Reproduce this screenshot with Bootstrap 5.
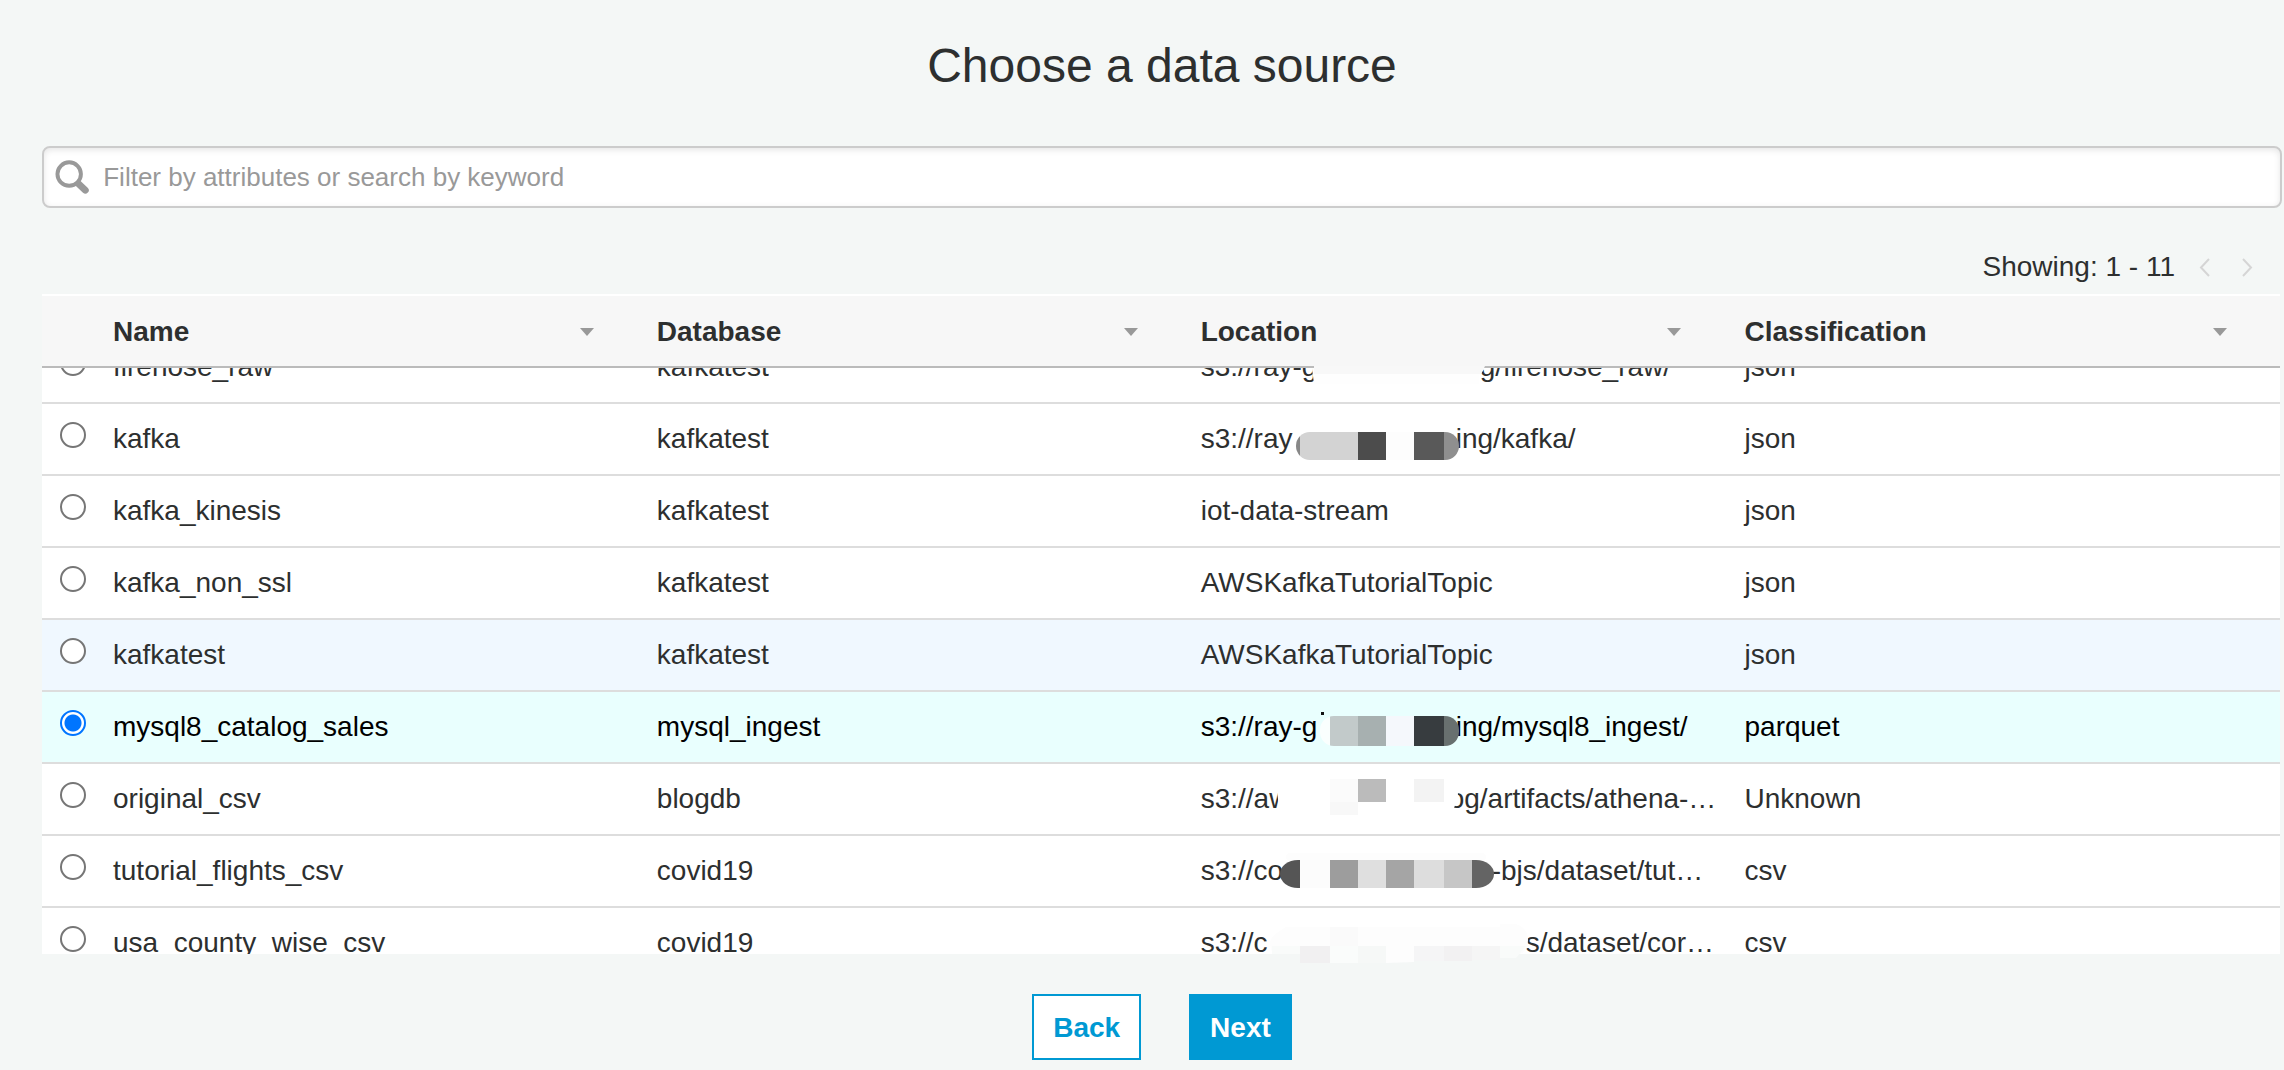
<!DOCTYPE html>
<html lang="en">
<head>
<meta charset="utf-8">
<meta name="viewport" content="width=device-width, initial-scale=1">
<title>Choose a data source</title>
<link href="https://cdn.jsdelivr.net/npm/bootstrap@5.3.0/dist/css/bootstrap.min.css" rel="stylesheet">
<style>
  body { background: #f4f7f6; color: #2d2f2f; font-family: "Liberation Sans", Arial, sans-serif; font-size: 28px; line-height: 32px; }
  .wizard { padding: 37px 2px 10px 42px; }
  .wizard-title { font-size: 48px; line-height: 58px; font-weight: 400; margin-bottom: 51px; }
  .filter-box { height: 62px; background: #fff; border: 2px solid #ccc; border-radius: 8px; box-shadow: inset 0 2px 6px rgba(0,0,0,.1); padding: 0 11px; gap: 13px; }
  .filter-box input { background: transparent; border: 0; padding: 0; font-size: 26px; line-height: 32px; color: #2d2f2f; box-shadow: none; }
  .filter-box input:focus { background: transparent; box-shadow: none; }
  .filter-box input::placeholder { color: #999; opacity: 1; }
  .pager { height: 86px; padding: 43px 27px 0 0; }
  .pager button { width: 14px; height: 22px; }
  .pager-arrows { gap: 30px; margin-left: 22px; padding-top: 7px; }
  .source-list { margin-right: 2px; }
  .source-scroll { height: 660px; overflow-y: auto; scrollbar-width: none; background: #fff; }
  .source-scroll::-webkit-scrollbar { display: none; }
  .source-table { width: 100%; table-layout: fixed; border-collapse: separate; border-spacing: 0; }
  .source-table col { width: 24.3%; }
  .source-table col:first-child { width: 61px; }
  .source-table col:last-child { width: auto; }
  .source-table th { position: sticky; top: 0; z-index: 1; height: 74px; background: #f7f7f7; border-top: 2px solid #fff; border-bottom: 2px solid #bbb; padding: 2px 53px 0 10px; }
  .source-table td { height: 72px; border-bottom: 2px solid #ddd; padding: 0 10px; white-space: nowrap; overflow: hidden; }
  .source-table td:first-child { padding: 0 0 0 18px; }
  .source-table label { display: block; }
  .row-hover td { background: #f0f8ff; }
  .row-picked td { background: #e9fffe; color: #000; }
  .source-table input { display: block; appearance: none; width: 26px; height: 26px; margin: 0 0 8px; border: 2px solid #767676; border-radius: 50%; background: #fff; }
  .source-table input:checked { border-color: #0075ff; background: radial-gradient(circle, #0075ff 8px, #fff 9px); }
  .caret { width: 14px; height: 8px; }
  .bucket { display: inline-block; }
  .bucket-s { width: 248px; }
  .bucket-m { width: 255px; }
  .bucket-l { width: 279px; }
  .bucket-xl { width: 291px; }
  .bucket-xxl { width: 325px; }
  .mosaic { position: absolute; z-index: 2; top: 0; left: calc(61px + 48.6%); width: 544px; height: 680px; pointer-events: none; }
  .actions { margin-top: 40px; gap: 48px; }
  .actions .btn { height: 66px; border: 2px solid #0099d3; border-radius: 0; padding: 2px 19px 0; font-size: 28px; line-height: 32px; font-weight: 700; }
  .btn-back, .btn-back:hover { background: #fff; color: #0099d3; }
  .btn-next, .btn-next:hover { background: #0099d3; color: #fff; }
</style>
<script src="https://cdn.jsdelivr.net/npm/bootstrap@5.3.0/dist/js/bootstrap.bundle.min.js"></script>
</head>
<body>
<main class="wizard">
  <h1 class="wizard-title text-center">Choose a data source</h1>

  <div class="filter-box d-flex align-items-center">
    <svg width="36" height="36" viewBox="0 0 36 36" fill="none" stroke="#999" aria-hidden="true"><circle cx="14.500" cy="15" r="12" stroke-width="4"/><path d="M24 25l7 6.500" stroke-width="7" stroke-linecap="round"/></svg>
    <input class="form-control" type="text" aria-label="Filter data sources" placeholder="Filter by attributes or search by keyword">
  </div>

  <div class="pager d-flex justify-content-end align-items-start">
    <span>Showing: 1 - 11</span>
    <div class="pager-arrows d-flex align-self-start">
      <button class="btn p-0 border-0 d-flex" type="button" aria-label="Previous page"><svg width="14" height="20" viewBox="0 0 14 20" fill="none" stroke="#d5d5d5" stroke-width="2"><path d="M12 1L4 9.500l8 8.500"/></svg></button>
      <button class="btn p-0 border-0 d-flex" type="button" aria-label="Next page"><svg width="14" height="20" viewBox="0 0 14 20" fill="none" stroke="#d5d5d5" stroke-width="2"><path d="M2 1l8 8.500L2 18"/></svg></button>
    </div>
  </div>

  <div class="source-list position-relative">
    <div class="source-scroll" id="sources">
      <table class="source-table">
        <colgroup><col><col><col><col><col></colgroup>
        <thead>
          <tr>
            <th></th>
            <th scope="col"><div class="d-flex justify-content-between align-items-center">Name <svg class="caret" viewBox="0 0 14 8"><path d="M0 0h14L7 8z" fill="#999"/></svg></div></th>
            <th scope="col"><div class="d-flex justify-content-between align-items-center">Database <svg class="caret" viewBox="0 0 14 8"><path d="M0 0h14L7 8z" fill="#999"/></svg></div></th>
            <th scope="col"><div class="d-flex justify-content-between align-items-center">Location <svg class="caret" viewBox="0 0 14 8"><path d="M0 0h14L7 8z" fill="#999"/></svg></div></th>
            <th scope="col"><div class="d-flex justify-content-between align-items-center">Classification <svg class="caret" viewBox="0 0 14 8"><path d="M0 0h14L7 8z" fill="#999"/></svg></div></th>
          </tr>
        </thead>
        <tbody>
          <tr><td><input type="radio" name="source" id="s1"></td><td><label for="s1">firehose_raw</label></td><td>kafkatest</td><td><span class="bucket bucket-l">s3://ray-g</span>g/firehose_raw/</td><td>json</td></tr>
          <tr><td><input type="radio" name="source" id="s2"></td><td><label for="s2">kafka</label></td><td>kafkatest</td><td><span class="bucket bucket-m">s3://ray</span>ing/kafka/</td><td>json</td></tr>
          <tr><td><input type="radio" name="source" id="s3"></td><td><label for="s3">kafka_kinesis</label></td><td>kafkatest</td><td>iot-data-stream</td><td>json</td></tr>
          <tr><td><input type="radio" name="source" id="s4"></td><td><label for="s4">kafka_non_ssl</label></td><td>kafkatest</td><td>AWSKafkaTutorialTopic</td><td>json</td></tr>
          <tr class="row-hover"><td><input type="radio" name="source" id="s5"></td><td><label for="s5">kafkatest</label></td><td>kafkatest</td><td>AWSKafkaTutorialTopic</td><td>json</td></tr>
          <tr class="row-picked"><td><input type="radio" name="source" id="s6" checked></td><td><label for="s6">mysql8_catalog_sales</label></td><td>mysql_ingest</td><td><span class="bucket bucket-m">s3://ray-g</span>ing/mysql8_ingest/</td><td>parquet</td></tr>
          <tr><td><input type="radio" name="source" id="s7"></td><td><label for="s7">original_csv</label></td><td>blogdb</td><td><span class="bucket bucket-s">s3://aw</span>og/artifacts/athena-…</td><td>Unknown</td></tr>
          <tr><td><input type="radio" name="source" id="s8"></td><td><label for="s8">tutorial_flights_csv</label></td><td>covid19</td><td><span class="bucket bucket-xl">s3://co</span>-bjs/dataset/tut…</td><td>csv</td></tr>
          <tr><td><input type="radio" name="source" id="s9"></td><td><label for="s9">usa_county_wise_csv</label></td><td>covid19</td><td><span class="bucket bucket-xxl">s3://c</span>s/dataset/cor…</td><td>csv</td></tr>
        </tbody>
      </table>
    </div>
    <!-- Pixelated masks over the private bucket names -->
    <svg class="mosaic" viewBox="1191 294 544 680" aria-hidden="true">
      <defs>
        <clipPath id="m2"><rect x="1296" y="432" width="163" height="28" rx="14"/></clipPath>
        <clipPath id="m6"><rect x="1320" y="716" width="139" height="30" rx="14"/></clipPath>
        <clipPath id="m8"><rect x="1280" y="860" width="214" height="28" rx="18"/></clipPath>
      </defs>
      <path d="M1312 368h173l-6 8v8h-165z" fill="#fefefe"/>
      <path d="M1314 366h171l-4 8h-167z" fill="#f8f8f8"/>
      <g clip-path="url(#m2)" shape-rendering="crispEdges">
        <path d="M1296 432h4v28h-4z" fill="#888"/><path d="M1300 432h58v28h-58z" fill="#d3d3d3"/><path d="M1358 432h28v28h-28z" fill="#4c4c4c"/><path d="M1386 432h28v28h-28z" fill="#fdfdfd"/><path d="M1414 432h30v28h-30z" fill="#595959"/><path d="M1444 432h16v28h-16z" fill="#8f8f8f"/>
      </g>
      <path d="M1321 712l3 0v3h-3z" fill="#111"/>
      <g clip-path="url(#m6)" shape-rendering="crispEdges">
        <path d="M1320 716h10v30h-10z" fill="#fafffe"/><path d="M1330 716h28v30h-28z" fill="#c2caca"/><path d="M1358 716h28v30h-28z" fill="#a7b0b0"/><path d="M1386 716h28v30h-28z" fill="#f5f8fc"/><path d="M1414 716h30v30h-30z" fill="#373c3f"/><path d="M1444 716h16v30h-16z" fill="#68706f"/>
      </g>
      <path d="M1276 778h176q6 10 6 16t-6 18l-8 8h-164z" fill="#fff"/>
      <g shape-rendering="crispEdges"><path d="M1330 779h28v23h-28z" fill="#fbfbfb"/><path d="M1358 779h28v23h-28z" fill="#bbb"/><path d="M1414 779h30v23h-30z" fill="#f3f3f3"/><path d="M1330 802h28v13h-28z" fill="#f8f8f8"/></g>
      <rect x="1286" y="853" width="200" height="8" rx="4" fill="#fdfdfd"/>
      <g clip-path="url(#m8)" shape-rendering="crispEdges">
        <path d="M1280 860h20v28h-20z" fill="#555"/><path d="M1300 860h30v28h-30z" fill="#fcfcfc"/><path d="M1330 860h28v28h-28z" fill="#9d9d9d"/><path d="M1358 860h28v28h-28z" fill="#dfdfdf"/><path d="M1386 860h28v28h-28z" fill="#a5a5a5"/><path d="M1414 860h30v28h-30z" fill="#ddd"/><path d="M1444 860h28v28h-28z" fill="#c6c6c6"/><path d="M1472 860h22v28h-22z" fill="#646464"/>
      </g>
      <path d="M1286 927h214v-3h16q12 4 12 16t-8 14h-106v8l-28 1h-56l-28-9h-28q-4-4-4-11t16-16z" fill="#fdfdfd"/>
      <g shape-rendering="crispEdges"><path d="M1330 927h28v19h-28z" fill="#fafafa"/><path d="M1272 946h28v8h-28z" fill="#f9fbfa"/><path d="M1300 946h30v17h-30z" fill="#f1f0f1"/><path d="M1330 946h28v17h-28z" fill="#fafcfb"/><path d="M1358 946h28v17h-28z" fill="#f6f8f7"/><path d="M1414 946h30v15h-30z" fill="#f5f5f6"/><path d="M1444 946h28v15h-28z" fill="#f2f1f2"/><path d="M1472 946h28v14h-28z" fill="#f5f5f5"/></g><path d="M1500 946h26l-10 12h-16z" fill="#f9fbfa"/>
    </svg>
  </div>

  <div class="actions d-flex justify-content-center">
    <button class="btn btn-back" type="button">Back</button>
    <button class="btn btn-next" type="button">Next</button>
  </div>
</main>
<script>
  // Open the list just past the top of its first row
  document.getElementById('sources').scrollTop = 36;
</script>
</body>
</html>
